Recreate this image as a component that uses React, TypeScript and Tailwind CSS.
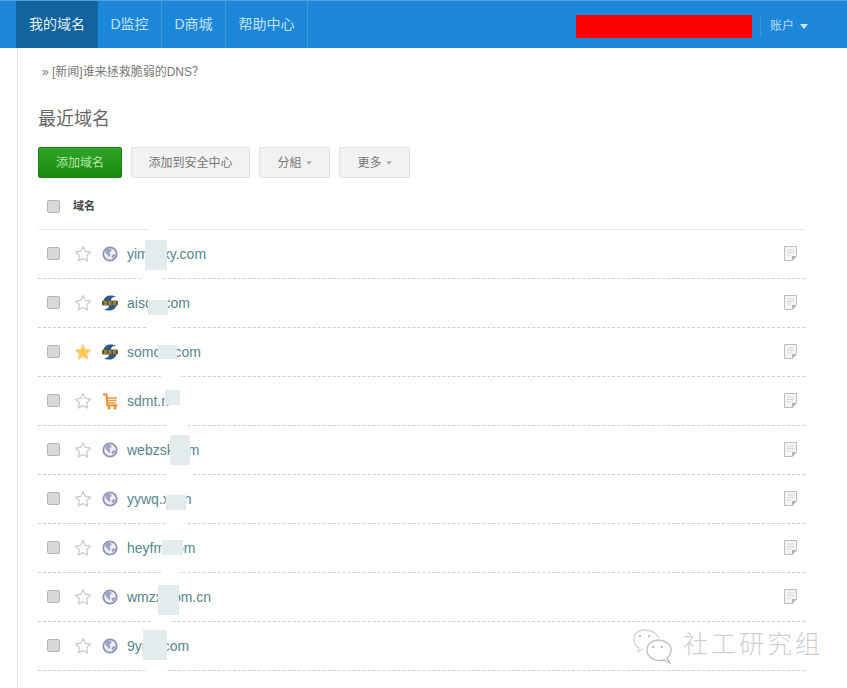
const FONT = '"Liberation Sans","Noto Sans CJK SC",sans-serif';

function Checkbox() {
  return <span className="block w-[13px] h-[13px] rounded-[2px] border border-[#b5b5b5] bg-[#d8d8d8] shrink-0 -mt-[2px]" />;
}

function Star({ on }: { on?: boolean }) {
  return (
    <svg width="18" height="18" viewBox="0 0 18 18" className="shrink-0">
      <path
        d="M9 1.5l2.3 4.9 5.2.7-3.800 3.700.9 5.300L9 13.500l-4.600 2.600.9-5.300L1.500 7.100l5.200-.7z"
        fill={on ? "#fbc850" : "#ffffff"}
        stroke={on ? "#f5d48c" : "#c9c9c9"}
        strokeWidth="1.200"
        strokeLinejoin="round"
      />
    </svg>
  );
}

function Globe() {
  return (
    <svg width="16" height="16" viewBox="0 0 16 16" className="shrink-0 -mt-[1px]">
      <circle cx="8" cy="8" r="6.700" fill="#eef0f6" stroke="#8f93b4" strokeWidth="1.800" />
      <path d="M6 2.500l3 .5 .5 2-2 1.500 1 2.500-1.500 2.500-1-2-2.500-2.500 0-2.500z" fill="#9ea3c4" />
      <path d="M10 9l3-1 .3 1.500-2.300 3-1.500-1.500z" fill="#9ea3c4" />
    </svg>
  );
}

function Dns() {
  return (
    <svg width="18" height="16" viewBox="0 0 18 16" className="shrink-0">
      <path d="M2.500 6C3 2.500 6 .5 10 .5c2 0 3.500 .5 5 1.500-4 0-5 1.500-5 4z" fill="#2c5a92" />
      <path d="M15.500 10c-.5 3.500-3.500 5.500-7.500 5.500-2 0-3.500-.5-5-1.500 4 0 5-1.500 5-4z" fill="#2c5a92" />
      <rect x="1" y="5.500" width="16" height="5" rx="1.500" fill="#5f5430" />
      <path d="M3 7h3M7.500 7h3M12 7h3M3 9h3M7.500 9h3M12 9h3" stroke="#d9a94a" strokeWidth="1" />
    </svg>
  );
}

function Cart() {
  return (
    <svg width="17" height="17" viewBox="0 0 17 17" className="shrink-0">
      <path d="M1 1.500h3.500l1 11h10" fill="none" stroke="#e58a2c" strokeWidth="2" />
      <path d="M5 5h10M5.500 7.500h9M6 10h8" stroke="#eb9c42" strokeWidth="1.600" />
      <circle cx="7" cy="15" r="1.400" fill="#e58a2c" />
      <circle cx="13" cy="15" r="1.400" fill="#e58a2c" />
    </svg>
  );
}

function Note() {
  return (
    <svg width="13" height="15" viewBox="0 0 13 15" className="shrink-0 -mt-[1px]">
      <path d="M.5.5h12v9l-4 5H.5z" fill="#f4f4f4" stroke="#bdbdbd" />
      <path d="M3 4h7M3 6.500h7M3 9h4" stroke="#d6d6d6" />
      <path d="M8 14.500V10h5z" fill="#b4b4b4" />
    </svg>
  );
}

const rows: { name: string; icon: "globe" | "dns" | "cart"; on?: boolean; noNote?: boolean }[] = [
  { name: "yimxxxy.com", icon: "globe" },
  { name: "aisqx.com", icon: "dns" },
  { name: "somcxi.com", icon: "dns", on: true },
  { name: "sdmt.n", icon: "cart" },
  { name: "webzskxxm", icon: "globe" },
  { name: "yywq.xxxn", icon: "globe" },
  { name: "heyfmx.om", icon: "globe" },
  { name: "wmzxxiom.cn", icon: "globe" },
  { name: "9yixx.com", icon: "globe", noNote: true },
];

const smudges = [
  { x: 145, y: 240, w: 22, h: 30 },
  { x: 148, y: 300, w: 20, h: 15 },
  { x: 158, y: 345, w: 19, h: 14 },
  { x: 165, y: 390, w: 15, h: 15 },
  { x: 170, y: 435, w: 20, h: 30 },
  { x: 166, y: 495, w: 20, h: 15 },
  { x: 162, y: 540, w: 21, h: 15 },
  { x: 158, y: 585, w: 21, h: 30 },
  { x: 143, y: 630, w: 24, h: 30 },
];

const gaps = [
  { x: 148, w: 20, y: 229 },
  { x: 143, w: 20, y: 278 },
  { x: 148, w: 24, y: 327 },
  { x: 162, w: 18, y: 376 },
  { x: 167, w: 20, y: 425 },
  { x: 167, w: 26, y: 474 },
  { x: 165, w: 22, y: 523 },
  { x: 162, w: 18, y: 572 },
  { x: 150, w: 20, y: 621 },
  { x: 145, w: 23, y: 670 },
];

const tabs = [
  { label: "D监控", w: "w-[64px]" },
  { label: "D商城", w: "w-[64px]" },
  { label: "帮助中心", w: "w-[82px]" },
];

export default function App() {
  return (
    <div className="relative w-[847px] h-[688px] overflow-hidden bg-white" style={{ fontFamily: FONT }}>
      <header className="flex h-[48px] bg-[#1c86d9] border-t border-[#5a9fd6] pl-4">
        <div className="w-[82px] flex items-center justify-center bg-[#12649f] text-[14px] text-[#e4eef6]">我的域名</div>
        {tabs.map((t) => (
          <div key={t.label} className={`${t.w} flex items-center justify-center border-r border-[#3f97dc] text-[14px] text-[#c4e2f8]`}>
            {t.label}
          </div>
        ))}
        <div className="ml-[268px] mt-[14px] w-[176px] h-[23px] bg-[#fa0000]" />
        <div className="ml-[8px] mt-[14px] h-[22px] border-l border-[#3f97dc] pl-[9px] flex items-center gap-[6px] text-[12px] text-[#bcdcf5]">
          账户
          <span className="w-0 h-0 border-x-[4px] border-x-transparent border-t-[5px] border-t-[#cfe6f8]" />
        </div>
      </header>

      <main className="ml-[17px] h-[640px] border-l border-[#e6e6e6] pl-[20px] w-[788px]">
        <p className="pt-[16px] pl-[4px] h-[46px] text-[12px] leading-[16px] text-[#777777]">
          » [新闻]谁来拯救脆弱的DNS？
        </p>
        <h1 className="text-[18px] leading-[24px] text-[#666666] mt-[13px]">最近域名</h1>
        <div className="flex gap-[9px] mt-[16px]">
          <button className="w-[84px] h-[31px] rounded-[2px] bg-[linear-gradient(#2fa52a,#178a0c)] border border-[#1b7d12] text-[12px] text-[#b6e6a8]">添加域名</button>
          <button className="w-[119px] h-[31px] rounded-[2px] bg-[#f2f2f2] border border-[#e0e0e0] text-[12px] text-[#777777]">添加到安全中心</button>
          <button className="w-[71px] h-[31px] rounded-[2px] bg-[#f2f2f2] border border-[#e0e0e0] text-[12px] text-[#777777] flex items-center justify-center gap-[4px]">
            分組
            <span className="w-0 h-0 border-x-[3.500px] border-x-transparent border-t-[4px] border-t-[#b5b5b5]" />
          </button>
          <button className="w-[71px] h-[31px] rounded-[2px] bg-[#f2f2f2] border border-[#e0e0e0] text-[12px] text-[#777777] flex items-center justify-center gap-[4px]">
            更多
            <span className="w-0 h-0 border-x-[3.500px] border-x-transparent border-t-[4px] border-t-[#b5b5b5]" />
          </button>
        </div>
        <div className="flex items-center h-[52px] border-b border-[#e8e8e8] pl-[9px] pt-[8px] gap-[13px]">
          <Checkbox />
          <span className="text-[11px] font-bold text-[#444444] -mt-[2px]">域名</span>
        </div>
        {rows.map((r) => (
          <div key={r.name} className="flex items-center h-[49px] border-b border-dashed border-[#cfcfcf] pl-[9px] pr-[8px]">
            <Checkbox />
            <span className="ml-[14px]"><Star on={r.on} /></span>
            <span className="ml-[9px] w-[18px] flex justify-center">
              {r.icon === "globe" ? <Globe /> : r.icon === "dns" ? <Dns /> : <Cart />}
            </span>
            <span className="ml-[8px] text-[14px] text-[#55858f]">{r.name}</span>
            {!r.noNote && <span className="ml-auto"><Note /></span>}
          </div>
        ))}
      </main>

      {gaps.map((g) => (
        <div key={g.y} className="absolute h-[3px] bg-white" style={{ left: g.x, top: g.y - 1, width: g.w }} />
      ))}
      {smudges.map((s) => (
        <div key={s.y} className="absolute bg-[#e3ebec]" style={{ left: s.x, top: s.y, width: s.w, height: s.h }} />
      ))}

      <div className="absolute left-[632px] top-[628px] flex items-center gap-[7px]">
        <svg width="44" height="36" viewBox="0 0 44 36">
          <path d="M27 10C24 3 17 2 11 2 5 3 1 7 2 13c0 3 3 6 5 7l-1 4 5-3" fill="none" stroke="#d6d6d6" strokeWidth="1.300" />
          <path d="M26 12c7 0 13 4 13 10 0 4-2 6-4 8l3 5-6-3c-8 2-17-2-17-10 0-6 5-10 11-10z" fill="#ffffff" stroke="#bdbdbd" strokeWidth="1.300" />
          <circle cx="8" cy="8" r="1.300" fill="#c4c4c4" />
          <circle cx="17" cy="8" r="1.300" fill="#c4c4c4" />
          <circle cx="21" cy="19" r="1.200" fill="#bdbdbd" />
          <circle cx="30" cy="19" r="1.200" fill="#bdbdbd" />
        </svg>
        <span className="text-[25px] leading-[28px] text-[#cfcfcf] tracking-[3px] -mt-[4px] font-light">社工研究组</span>
      </div>
    </div>
  );
}
